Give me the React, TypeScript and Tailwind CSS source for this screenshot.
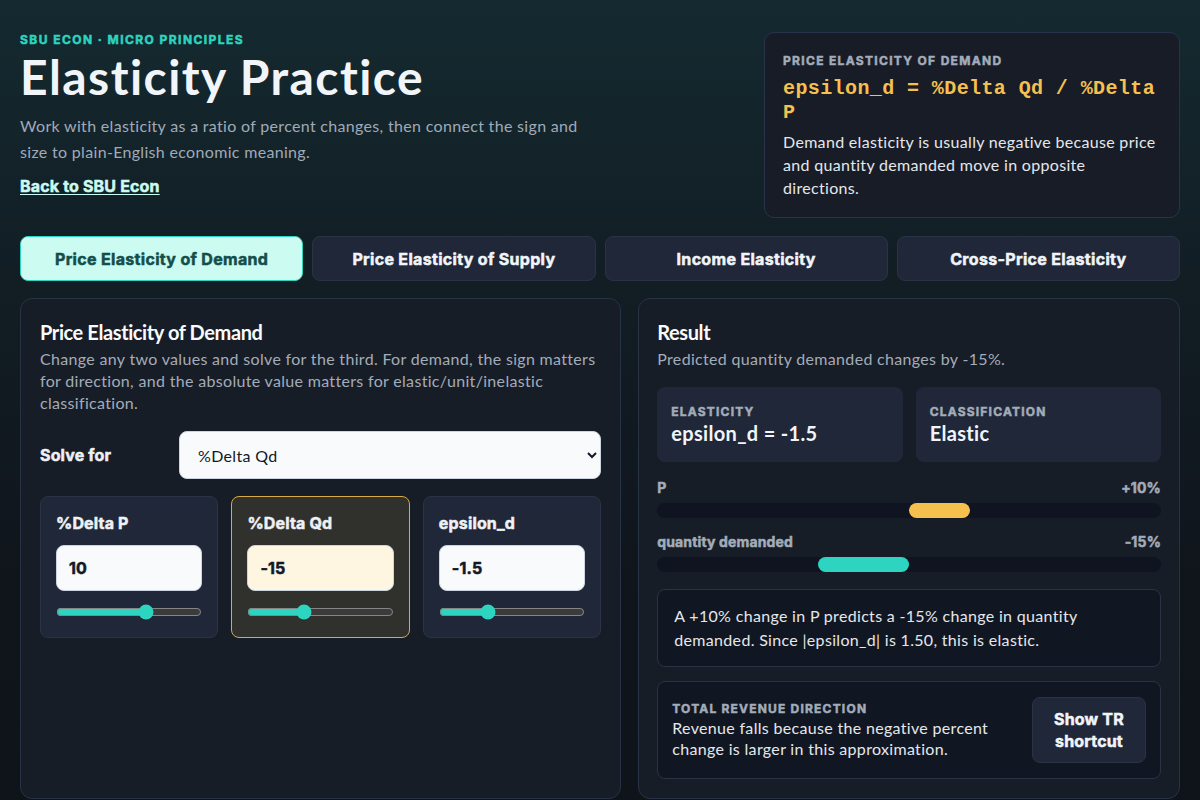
import React, { useState } from 'react';

type Mode = 'ped' | 'pes' | 'inc' | 'cross';

const tabs: { id: Mode; label: string }[] = [
  { id: 'ped', label: 'Price Elasticity of Demand' },
  { id: 'pes', label: 'Price Elasticity of Supply' },
  { id: 'inc', label: 'Income Elasticity' },
  { id: 'cross', label: 'Cross-Price Elasticity' },
];

// heavy display face for labels, tabs and eyebrows
const heavy = "font-['Inter',sans-serif] font-bold [-webkit-text-stroke:0.5px_currentColor]";

const Bar: React.FC<{ label: string; value: number; color: string }> = ({ label, value, color }) => {
  const width = Math.abs(value) * 1.2;
  const left = value >= 0 ? 50 : 50 - width;
  return (
    <div>
      <div className={`flex justify-between text-[14px] leading-[20px] tracking-[0.01em] text-[#a3acb9] ${heavy}`}>
        <span>{label}</span>
        <span>{value > 0 ? `+${value}%` : `${value}%`}</span>
      </div>
      <div className="relative mt-[5px] h-[15px] rounded-full bg-[#0f1420]">
        <div className={`absolute top-0 h-full rounded-full ${color}`} style={{ left: `${left}%`, width: `${width}%` }} />
      </div>
    </div>
  );
};

const VarCard: React.FC<{ label: string; value: string; min: number; max: number; step: number; solved?: boolean }> = ({
  label,
  value,
  min,
  max,
  step,
  solved,
}) => (
  <div
    className={`rounded-[8px] border px-[15px] pt-[16px] pb-[17px] ${
      solved ? 'border-[#d6aa45] bg-[#30302c]' : 'border-[#2b3446] bg-[#1f2738]'
    }`}
  >
    <div className={`text-[16px] leading-[20px] tracking-[0.01em] text-[#eef1f5] ${heavy}`}>{label}</div>
    <input
      type="text"
      defaultValue={value}
      className={`mt-[12px] h-[46px] w-full rounded-[8px] border border-[#cbd5e1] px-[12px] text-[16px] tracking-[0.01em] text-[#111827] outline-none ${heavy} ${
        solved ? 'bg-[#fef6e0]' : 'bg-[#f8fafc]'
      }`}
    />
    <input
      type="range"
      min={min}
      max={max}
      step={step}
      defaultValue={parseFloat(value)}
      className="mt-[13px] block w-full accent-[#2dd4bf] scheme-dark"
    />
  </div>
);

export default function App() {
  const [mode, setMode] = useState<Mode>('ped');

  return (
    <div className="min-h-screen bg-[linear-gradient(180deg,#142a30_0%,#121d24_35%,#10151c_70%,#0f141a_100%)] px-[20px] pt-[31px] pb-[20px] font-['Lato',sans-serif] tracking-[0.02em] text-[#e5e7eb]">
      <header className="flex items-start justify-between gap-6">
        <div>
          <div className={`text-[12px] leading-[18px] uppercase tracking-[0.12em] text-[#2dd4bf] ${heavy}`}>SBU Econ · Micro Principles</div>
          <h1 className="mt-[0px] text-[48px] font-bold leading-[56px] tracking-[0.03em] text-[#f1f5f9]">Elasticity Practice</h1>
          <p className="mt-[8px] max-w-[560px] text-[16px] leading-[26px] text-[#a0aab8]">
            Work with elasticity as a ratio of percent changes, then connect the sign and size to plain-English economic meaning.
          </p>
          <a href="#" className={`mt-[9px] inline-block text-[16px] tracking-[0.01em] text-[#ccfbf1] underline underline-offset-2 ${heavy}`}>
            Back to SBU Econ
          </a>
        </div>
        <div className="mt-[1px] w-[416px] shrink-0 rounded-[10px] border border-[#28324a] bg-[#171c27] px-[18px] pt-[20px] pb-[18px]">
          <div className={`text-[12px] leading-[16px] uppercase tracking-[0.11em] text-[#a3acb9] ${heavy}`}>Price Elasticity of Demand</div>
          <div className="mt-[8px] font-['Liberation_Mono',monospace] text-[20px] font-bold leading-[24px] tracking-[0.02em] text-[#f6c04f]">
            epsilon_d = %Delta Qd / %Delta P
          </div>
          <p className="mt-[5px] text-[16px] leading-[23px] text-[#e5e7eb]">
            Demand elasticity is usually negative because price and quantity demanded move in opposite directions.
          </p>
        </div>
      </header>

      <nav className="mt-[18px] grid grid-cols-4 gap-[9px]">
        {tabs.map(t => (
          <button
            key={t.id}
            onClick={() => setMode(t.id)}
            className={`h-[45px] rounded-[8px] border text-[16px] tracking-[0.02em] ${heavy} ${
              mode === t.id ? 'border-[#2dd4bf] bg-[#ccfbf1] text-[#134e4a]' : 'border-[#2a3344] bg-[#1f2738] text-[#f1f5f9]'
            }`}
          >
            {t.label}
          </button>
        ))}
      </nav>

      <main className="mt-[17px] grid grid-cols-[1.11fr_1fr] gap-[17px]">
        <section className="rounded-[12px] border border-[#283245] bg-[#171d27] px-[19px] pt-[20px] pb-[20px]">
          <h2 className="text-[20px] font-bold leading-[26px] tracking-[-0.02em] text-[#f8fafc]">Price Elasticity of Demand</h2>
          <p className="mt-[3px] text-[16px] leading-[22px] text-[#a3acb9]">
            Change any two values and solve for the third. For demand, the sign matters for direction, and the absolute value matters for elastic/unit/inelastic classification.
          </p>
          <div className="mt-[17px] grid grid-cols-[120px_1fr] items-center gap-[19px]">
            <label className={`text-[16px] tracking-[0.01em] text-[#eef1f5] ${heavy}`}>Solve for</label>
            <select
              defaultValue="qd"
              className="h-[48px] w-full rounded-[8px] border border-[#cbd5e1] bg-[#f8fafc] px-[14px] text-[16px] text-[#111827]"
            >
              <option value="p">%Delta P</option>
              <option value="qd">%Delta Qd</option>
              <option value="e">epsilon_d</option>
            </select>
          </div>
          <div className="mt-[17px] grid grid-cols-3 gap-[13px]">
            <VarCard label="%Delta P" value="10" min={-40} max={40} step={1} />
            <VarCard label="%Delta Qd" value="-15" min={-60} max={60} step={1} solved />
            <VarCard label="epsilon_d" value="-1.5" min={-4} max={4} step={0.1} />
          </div>
        </section>

        <section className="rounded-[12px] border border-[#283245] bg-[#171d27] px-[18px] pt-[20px] pb-[19px]">
          <h2 className="text-[20px] font-bold leading-[26px] tracking-[-0.02em] text-[#f8fafc]">Result</h2>
          <p className="mt-[3px] text-[16px] leading-[22px] text-[#a3acb9]">Predicted quantity demanded changes by -15%.</p>
          <div className="mt-[17px] grid grid-cols-2 gap-[13px]">
            <div className="rounded-[8px] bg-[#1f2738] px-[14px] pt-[17px] pb-[16px]">
              <div className={`text-[12px] leading-[16px] uppercase tracking-[0.1em] text-[#a3acb9] ${heavy}`}>Elasticity</div>
              <div className="text-[20px] font-bold leading-[26px] text-[#f1f5f9]">epsilon_d = -1.5</div>
            </div>
            <div className="rounded-[8px] bg-[#1f2738] px-[14px] pt-[17px] pb-[16px]">
              <div className={`text-[12px] leading-[16px] uppercase tracking-[0.1em] text-[#a3acb9] ${heavy}`}>Classification</div>
              <div className="text-[20px] font-bold leading-[26px] text-[#f1f5f9]">Elastic</div>
            </div>
          </div>
          <div className="mt-[16px] flex flex-col gap-[14px]">
            <Bar label="P" value={10} color="bg-[#f6c04f]" />
            <Bar label="quantity demanded" value={-15} color="bg-[#2dd4bf]" />
          </div>
          <div className="mt-[17px] rounded-[8px] border border-[#2a3344] bg-[#111722] px-[16px] py-[14px] text-[16px] leading-[24px] text-[#e5e7eb]">
            A +10% change in P predicts a -15% change in quantity demanded. Since |epsilon_d| is 1.50, this is elastic.
          </div>
          <div className="mt-[14px] flex items-center justify-between gap-4 rounded-[8px] border border-[#2a3344] bg-[#111722] py-[15px] pr-[14px] pl-[14px]">
            <div>
              <div className={`text-[12px] leading-[16px] uppercase tracking-[0.1em] text-[#a3acb9] ${heavy}`}>Total Revenue Direction</div>
              <p className="text-[16px] leading-[21px] text-[#e5e7eb]">
                Revenue falls because the negative percent change is larger in this approximation.
              </p>
            </div>
            <button className={`h-[66px] w-[114px] shrink-0 rounded-[8px] border border-[#2a3344] bg-[#1f2738] px-[14px] text-[16px] leading-[22px] tracking-[0.01em] text-[#f1f5f9] ${heavy}`}>
              Show TR shortcut
            </button>
          </div>
        </section>
      </main>
    </div>
  );
}
